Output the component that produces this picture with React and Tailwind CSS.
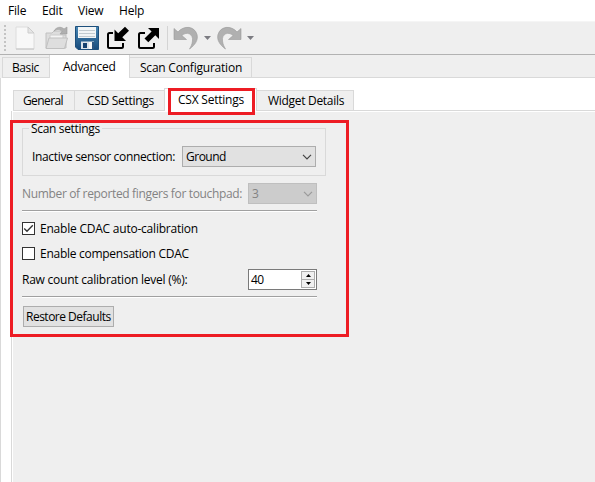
import React from 'react';

const line = 'border-[#d9d9d9]';

function Label({ className = '', children }) {
  return <span className={`block whitespace-nowrap leading-4 ${className}`}>{children}</span>;
}

function Chevron({ color }) {
  return (
    <svg width="10" height="6" viewBox="0 0 10 6" fill="none" stroke={color} strokeWidth="1.2">
      <path d="M1 .8 5 4.8 9 .8" />
    </svg>
  );
}

function Caret() {
  return (
    <svg width="7" height="4" viewBox="0 0 7 4" fill="#7c7c82">
      <path d="M0 0H7L3.5 4Z" />
    </svg>
  );
}

function NewIcon() {
  return (
    <svg width="20" height="24" viewBox="0 0 20 24">
      <path d="M1 1H13L19 7V23H1Z" fill="#f8f8f8" stroke="#dcdcdc" />
      <path d="M13 1V7H19Z" fill="#e6e6e6" stroke="#cccccc" />
      <path d="M1 23H19" stroke="#c4c4c4" />
    </svg>
  );
}

function OpenIcon() {
  return (
    <svg width="24" height="24" viewBox="0 0 24 24">
      <path d="M1 22V7H7L9 5H17V9H21V22Z" fill="#dddddd" stroke="#c0c0c0" />
      <path d="M5 9H18V13H5Z" fill="#f4f4f4" stroke="#cccccc" />
      <path d="M4 12H22.500L19.500 22.500H1Z" fill="#dedede" stroke="#c0c0c0" />
      <path d="M9 5C11 1 16 0 19 3L22 1V8H15L17 5.500C15 3 12 3 9 5Z" fill="#b0b0b0" stroke="#9c9c9c" strokeWidth=".6" />
    </svg>
  );
}

function SaveIcon() {
  return (
    <svg width="24" height="24" viewBox="0 0 24 24">
      <defs>
        <linearGradient id="disk" x2="0" y2="1">
          <stop stopColor="#4887b4" />
          <stop offset="1" stopColor="#174b7c" />
        </linearGradient>
      </defs>
      <path d="M.5.5H23.500V23.500H3L.5 21Z" fill="url(#disk)" stroke="#1d4f7c" />
      <path d="M3 1H21V12H3Z" fill="#f2f5f6" />
      <path d="M4 4.500H20M4 7.500H20M4 10.500H20" stroke="#c3cbd0" />
      <path d="M6 15.500H19V23H6Z" fill="#dce4ea" />
      <path d="M8 17H12V22H8Z" fill="#164270" />
      <path d="M14 16H17V23H14Z" fill="#f8f8f8" />
      <path d="M17 16H19V23H17Z" fill="#2b5580" />
    </svg>
  );
}

function ImportIcon() {
  return (
    <svg width="24" height="24" viewBox="0 0 24 24">
      <path d="M7 7H3.500Q2 7 2 8.500V20.500Q2 22 3.500 22H15.500Q17 22 17 20.500V17" fill="none" stroke="#000" strokeWidth="2" />
      <path d="M8.500 3.500V15H20L16.300 11.300L23 4.700L19 .8L12.200 7.300Z" />
    </svg>
  );
}

function ExportIcon() {
  return (
    <svg width="24" height="24" viewBox="0 0 24 24">
      <path d="M8 7H3.500Q2 7 2 8.500V20.500Q2 22 3.500 22H15.500Q17 22 17 20.500V17" fill="none" stroke="#000" strokeWidth="2" />
      <path d="M11 2H22V13L18.300 9.300L11.300 16.300L7.500 12.500L14.600 5.600Z" />
    </svg>
  );
}

function UndoIcon({ flip }) {
  return (
    <svg width="25" height="24" viewBox="0 0 25 24" className={flip ? '-scale-x-100' : ''}>
      <path
        d="M1 2.500V13.500H13.500L8.800 9.500C14 5 20.500 8 19.500 15C19 18.500 18 20.500 16.500 23C22 19 25.500 14 24 8.500C21.500 0 11 -1 5 6Z"
        fill="#b0b0b0"
        stroke="#989898"
        strokeWidth=".6"
      />
    </svg>
  );
}

function Toolbar() {
  return (
    <div className="flex h-[34px] items-center border-b border-t border-b-[#b2b2b2] border-t-[#f5f5f5] bg-[#efefef] pl-1">
      <div className="flex w-[11px] flex-col gap-[2px]">
        {[0, 1, 2, 3, 4, 5, 6].map((n) => (
          <i key={n} className="block size-[2px] bg-[#c3c3c3]" />
        ))}
      </div>
      <NewIcon />
      <div className="ml-[10px]"><OpenIcon /></div>
      <div className="ml-[6px]"><SaveIcon /></div>
      <div className="ml-[7px]"><ImportIcon /></div>
      <div className="ml-[7px]"><ExportIcon /></div>
      <div className="ml-[6px] h-6 w-px bg-[#d4d4d4]" />
      <div className="ml-[5px]"><UndoIcon /></div>
      <div className="ml-[6px]"><Caret /></div>
      <div className="ml-[6px]"><UndoIcon flip /></div>
      <div className="ml-[5px]"><Caret /></div>
    </div>
  );
}

function Separator() {
  return <div className="h-[2px] w-[295px] border-b border-t border-b-white border-t-[#a0a0a0]" />;
}

function Checkbox({ checked, children }) {
  return (
    <div className="flex h-[13px] items-center">
      <div className="mr-[5px] size-[13px] border border-[#333] bg-white">
        {checked && (
          <svg width="11" height="11" viewBox="0 0 11 11" fill="none" stroke="#333" strokeWidth="1.300">
            <path d="M1.200 5.500 4 8.300 9.800 2.200" />
          </svg>
        )}
      </div>
      {children}
    </div>
  );
}

function Settings() {
  return (
    <div className="pl-[9px] pt-4">
      <fieldset className={`relative h-12 w-[304px] border ${line}`}>
        <div className="absolute -top-[8px] left-[6px] bg-[#efefef] px-[2px]">
          <Label className="tracking-[-0.33px]">Scan settings</Label>
        </div>
        <div className="flex items-center pl-[9px] pt-[17px]">
          <Label className="w-[150px] tracking-[-0.34px]">Inactive sensor connection:</Label>
          <div className="flex h-[21px] w-[134px] items-center justify-between border border-[#adadad] bg-[#e1e1e1] pl-[3px] pr-[3px]">
            <Label className="tracking-[-0.5px]">Ground</Label>
            <Chevron color="#444" />
          </div>
        </div>
      </fieldset>
      <div className="mt-[7px] flex items-center text-[#838383]">
        <Label className="w-[226px] tracking-[-0.34px]">Number of reported fingers for touchpad:</Label>
        <div className="flex h-[21px] w-[69px] items-center justify-between border border-[#bfbfbf] bg-[#cccccc] pl-[3px] pr-[3px]">
          <Label>3</Label>
          <Chevron color="#9b9b9b" />
        </div>
      </div>
      <div className="mt-[6px]"><Separator /></div>
      <div className="mt-[10px]">
        <Checkbox checked><Label className="tracking-[-0.22px]">Enable CDAC auto-calibration</Label></Checkbox>
      </div>
      <div className="mt-3">
        <Checkbox><Label className="tracking-[-0.27px]">Enable compensation CDAC</Label></Checkbox>
      </div>
      <div className="mt-[9px] flex items-center">
        <Label className="w-[226px] tracking-[-0.23px]">Raw count calibration level (%):</Label>
        <div className="flex h-[21px] w-[69px] items-center justify-between border border-[#7a7a7a] bg-white pl-[2px] pr-px">
          <Label className="tracking-[-0.5px]">40</Label>
          <div className="flex h-[17px] w-[14px] flex-col">
            <div className="flex h-[9px] items-center justify-center border border-[#adadad] bg-[#f0f0f0]">
              <svg width="5" height="3" viewBox="0 0 5 3"><path d="M0 3H5L2.500 0Z" /></svg>
            </div>
            <div className="flex h-2 items-center justify-center border border-t-0 border-[#adadad] bg-[#f0f0f0]">
              <svg width="5" height="3" viewBox="0 0 5 3"><path d="M0 0H5L2.500 3Z" /></svg>
            </div>
          </div>
        </div>
      </div>
      <div className="mt-[6px]"><Separator /></div>
      <button className="ml-px mt-2 flex h-[21px] w-[91px] items-center border border-[#adadad] bg-[#e1e1e1] pl-[2px]">
        <Label className="tracking-[-0.5px]">Restore Defaults</Label>
      </button>
    </div>
  );
}

export default function App() {
  return (
    <div className="relative flex h-[482px] w-[595px] flex-col overflow-hidden bg-[#efefef] font-['Open_Sans','Noto_Sans',sans-serif] text-[12px] text-black">
      <nav className="flex h-[21px] bg-white pl-2 pt-[3px]">
        <Label className="w-[34px] tracking-[-0.2px]">File</Label>
        <Label className="w-9 tracking-[-0.2px]">Edit</Label>
        <Label className="w-[41px] tracking-[-0.2px]">View</Label>
        <Label className="tracking-[-0.2px]">Help</Label>
      </nav>
      <Toolbar />
      <div className="flex h-[23px] shrink-0 items-end pl-[2px]">
        <div className={`h-[21px] w-[47px] border border-r-0 ${line} pl-[9px] pt-[2px]`}>
          <Label className="tracking-[-0.4px]">Basic</Label>
        </div>
        <div className="h-[23px] w-[81px] border-x border-[#d9d9d9] bg-white pl-[13px] pt-1">
          <Label className="tracking-[-0.27px]">Advanced</Label>
        </div>
        <div className={`h-[21px] w-[122px] border border-l-0 ${line} pl-[10px] pt-[2px]`}>
          <Label className="tracking-[-0.22px]">Scan Configuration</Label>
        </div>
        <div className={`h-px flex-1 border-b ${line}`} />
      </div>
      <main className={`flex flex-1 flex-col border-l ${line} bg-white pl-[10px] pt-[10px]`}>
        <div className="flex h-[23px] shrink-0 items-end pl-[2px]">
          <div className={`h-[21px] w-[62px] border ${line} bg-[#efefef] pl-[9px] pt-[2px]`}>
            <Label className="tracking-[-0.6px]">General</Label>
          </div>
          <div className={`h-[21px] w-[89px] border border-x-0 ${line} bg-[#efefef] pl-3 pt-[2px]`}>
            <Label className="tracking-[-0.3px]">CSD Settings</Label>
          </div>
          <div className={`h-[23px] w-[93px] border border-b-0 ${line} bg-white pl-[13px] pt-[3px]`}>
            <Label className="tracking-[-0.22px]">CSX Settings</Label>
          </div>
          <div className={`h-[21px] w-[97px] border border-l-0 ${line} bg-[#efefef] pl-[11px] pt-[2px]`}>
            <Label className="tracking-[-0.3px]">Widget Details</Label>
          </div>
          <div className={`h-px flex-1 border-b ${line}`} />
        </div>
        <div className={`flex-1 border-l ${line} pl-px pt-px`}>
          <div className="h-full bg-[#efefef]"><Settings /></div>
        </div>
      </main>
      <div className="absolute left-[168px] top-[88px] h-[27px] w-[87px] border-[3px] border-[#ed1c24]" />
      <div className="absolute left-[10px] top-[120px] h-[217px] w-[339px] border-[3px] border-[#ed1c24]" />
    </div>
  );
}
